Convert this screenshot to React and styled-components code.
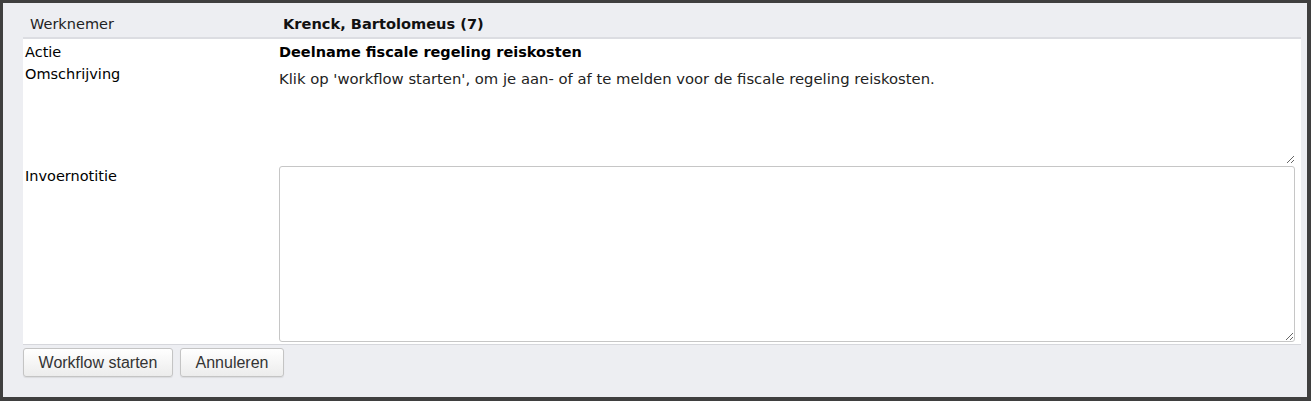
import React from 'react';
import styled, { createGlobalStyle } from 'styled-components';

const GlobalStyle = createGlobalStyle`
  html, body {
    margin: 0;
    padding: 0;
    background: #3f3f3f;
  }
  * { box-sizing: border-box; }
`;

const Frame = styled.div`
  width: 1311px;
  height: 401px;
  border-style: solid;
  border-color: #3f3f3f;
  border-width: 3px 4px 4px 3px;
  background: #edeef2;
  padding: 0 6px 0 20px;
  font-family: "DejaVu Sans", Verdana, sans-serif;
  font-size: 14.5px;
  color: #000;
`;

const HeaderRow = styled.div`
  display: grid;
  grid-template-columns: 256px 1fr;
  height: 36px;
  align-items: center;
  border-bottom: 2px solid #dcdde2;
  padding-top: 7px;
`;

const HeaderLabel = styled.div`
  padding-left: 7px;
  font-size: 14.5px;
  color: #222;
`;

const HeaderValue = styled.div`
  padding-left: 4px;
  font-size: 14.6px;
  font-weight: bold;
  color: #111;
`;

const Panel = styled.div`
  background: #fff;
  height: 306px;
  border-bottom: 1px solid #d6d7dc;
  padding: 5px 6px 2px 2px;
`;

const Row = styled.div`
  display: grid;
  grid-template-columns: 254px 1fr;
  margin-top: ${p => p.$top || 0}px;
  line-height: 16px;
`;

const Label = styled.div`
  padding-top: ${p => p.$pad || 0}px;
`;

const Value = styled.div`
  font-weight: ${p => (p.$bold ? 'bold' : 'normal')};
  font-size: 14.5px;
`;

const ReadText = styled.textarea`
  display: block;
  width: 100%;
  height: 98px;
  border: none;
  outline: none;
  padding: 5px 0 0 0;
  margin: 0;
  font-family: inherit;
  font-size: 14.8px;
  line-height: 16px;
  color: #222;
  background: #fff;
  resize: vertical;
`;

const NoteArea = styled.textarea`
  display: block;
  width: 100%;
  height: 176px;
  border: 1px solid #c6c6c6;
  border-radius: 3px;
  padding: 4px;
  margin: 0;
  font-family: inherit;
  font-size: 14.5px;
  background: #fff;
  resize: vertical;
  outline: none;
`;

const ButtonBar = styled.div`
  display: flex;
  gap: 7px;
  padding-top: 3px;
`;

const Button = styled.button`
  height: 29px;
  width: ${p => p.$w}px;
  border: 1px solid #c4c4c4;
  border-radius: 3px;
  background: linear-gradient(#ffffff, #ececec);
  box-shadow: 0 1px 1px rgba(0, 0, 0, 0.08);
  font-family: "Liberation Sans", Arial, sans-serif;
  font-size: 16px;
  color: #333;
  padding: 0;
  cursor: pointer;
`;

export default function App() {
  return (
    <>
      <GlobalStyle />
      <Frame>
        <HeaderRow>
          <HeaderLabel>Werknemer</HeaderLabel>
          <HeaderValue>Krenck, Bartolomeus (7)</HeaderValue>
        </HeaderRow>
        <Panel>
          <Row>
            <Label>Actie</Label>
            <Value $bold>Deelname fiscale regeling reiskosten</Value>
          </Row>
          <Row $top={6}>
            <Label>Omschrijving</Label>
            <ReadText
              readOnly
              defaultValue="Klik op 'workflow starten', om je aan- of af te melden voor de fiscale regeling reiskosten."
            />
          </Row>
          <Row $top={2}>
            <Label $pad={2}>Invoernotitie</Label>
            <NoteArea />
          </Row>
        </Panel>
        <ButtonBar>
          <Button $w={150}>Workflow starten</Button>
          <Button $w={104}>Annuleren</Button>
        </ButtonBar>
      </Frame>
    </>
  );
}
